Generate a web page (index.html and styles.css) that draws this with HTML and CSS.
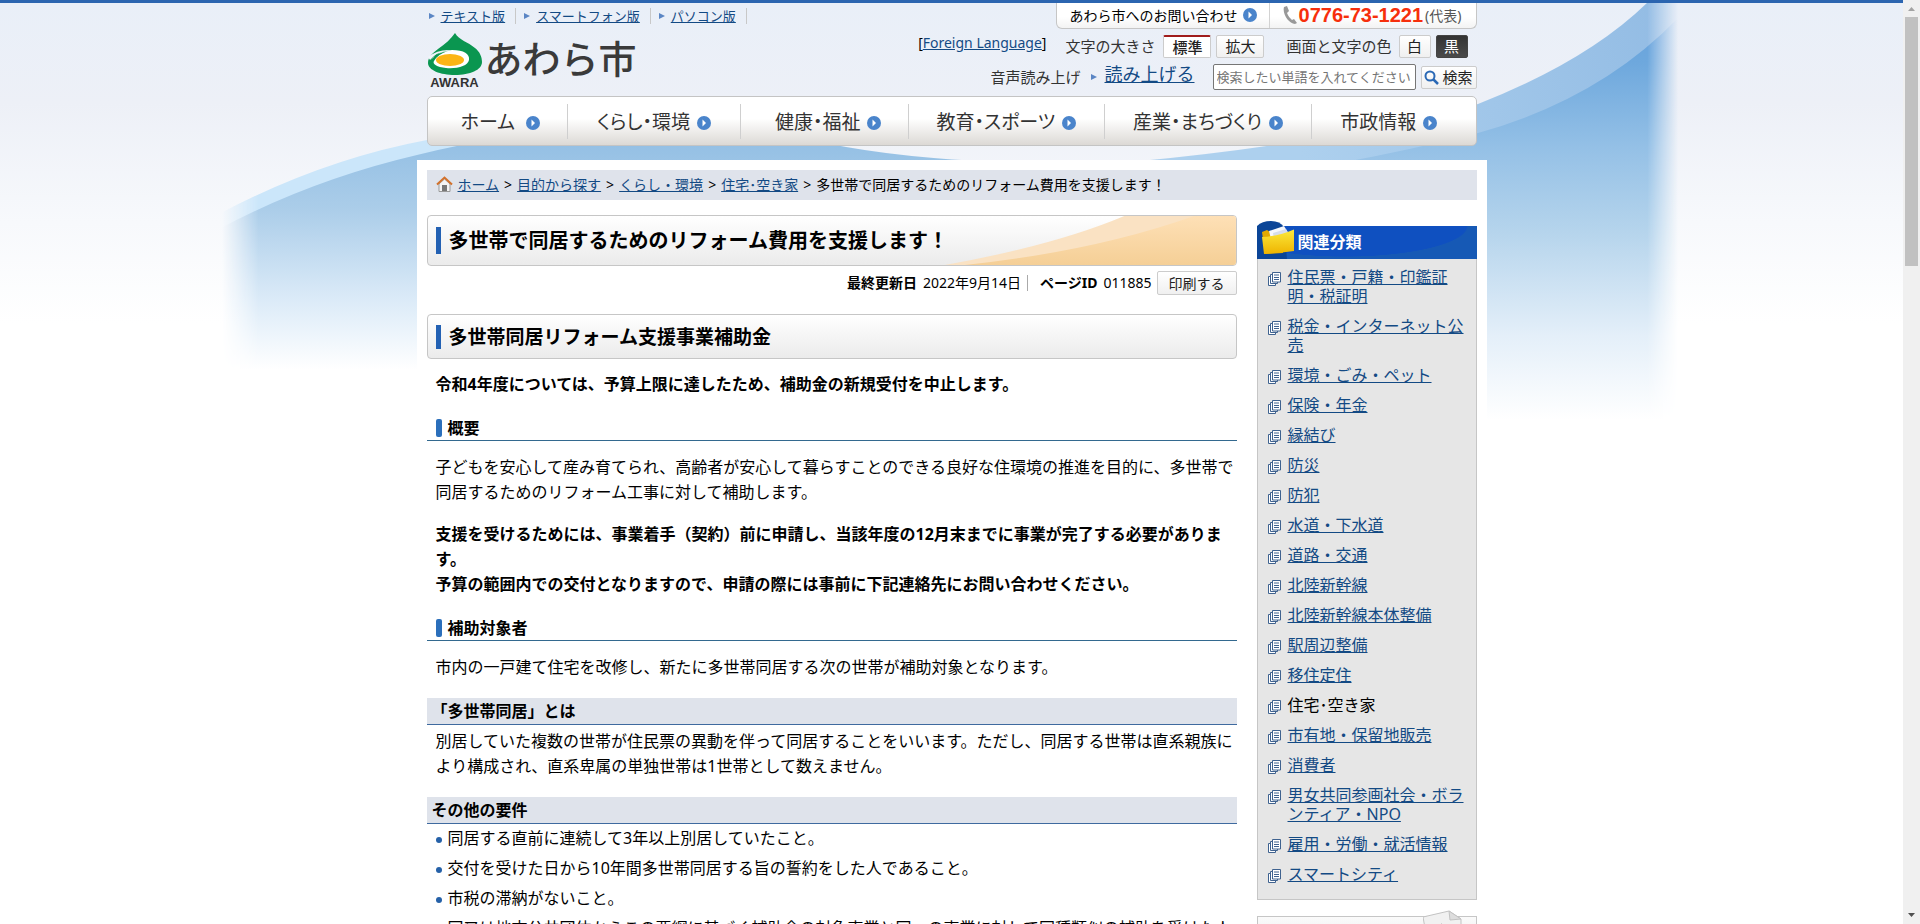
FILE: index.html
```
<!DOCTYPE html>
<html lang="ja">
<head>
<meta charset="utf-8">
<title>多世帯で同居するためのリフォーム費用を支援します！ | あわら市</title>
<link rel="stylesheet" href="styles.css">
</head>
<body>
<svg class="defs" width="0" height="0" aria-hidden="true">
  <symbol id="go" viewBox="0 0 14 14"><circle cx="7" cy="7" r="7" fill="#4a84cb"/><path d="M5.500 3.500 9 7l-3.500 3.500z" fill="#fff"/></symbol>
  <symbol id="tri" viewBox="0 0 6 6"><path d="M0 0 6 3 0 6z" fill="#5b86c4"/></symbol>
  <symbol id="pages" viewBox="0 0 14 14"><g fill="#fff" stroke="#3f628f" stroke-width="1"><path d="M.5 4.500h7v9h-7z"/><path d="M2.500 2.500h7v9h-7z"/><path d="M4.500.5h8v9.500h-8z"/></g><path d="M6 3h5M6 5.500h5M6 7.500h5" stroke="#3f628f" fill="none"/></symbol>
</svg>
<div class="shell">
<div class="page">
  <div class="backdrop" aria-hidden="true">
    <svg width="1903" height="430" viewBox="0 0 1903 430">
      <defs>
        <linearGradient id="sky" gradientUnits="userSpaceOnUse" x1="0" y1="0" x2="0" y2="420">
          <stop offset="0" stop-color="#639fdd"/><stop offset=".15" stop-color="#6ea8dd"/><stop offset=".35" stop-color="#94c0e6"/><stop offset=".55" stop-color="#b5d4ec"/><stop offset=".8" stop-color="#e4eff9"/><stop offset="1" stop-color="#fff"/>
        </linearGradient>
        <linearGradient id="edge" gradientUnits="userSpaceOnUse" x1="222" y1="0" x2="1678" y2="0">
          <stop offset="0" stop-color="#000"/><stop offset=".025" stop-color="#fff"/><stop offset=".979" stop-color="#fff"/><stop offset="1" stop-color="#000"/>
        </linearGradient>
        <linearGradient id="band" gradientUnits="userSpaceOnUse" x1="1300" y1="150" x2="1660" y2="0">
          <stop offset="0" stop-color="#add0ee"/><stop offset="1" stop-color="#93bce4"/>
        </linearGradient>
        <linearGradient id="low" gradientUnits="userSpaceOnUse" x1="0" y1="140" x2="0" y2="370">
          <stop offset="0" stop-color="#93bfe4"/><stop offset=".3" stop-color="#abcde9"/><stop offset=".7" stop-color="#dcebf8"/><stop offset="1" stop-color="#fff"/>
        </linearGradient>
        <mask id="fade" maskUnits="userSpaceOnUse" x="0" y="0" width="1903" height="430"><rect width="1903" height="430" fill="url(#edge)"/></mask>
      </defs>
      <g mask="url(#fade)">
        <path d="M215 216Q320 160 427 140Q640 105 830 145L417 190Q320 200 215 232z" fill="#cbe6fa"/>
        <path d="M215 231Q310 180 417 155Q620 105 830 144Q900 158 1000 162V370H215z" fill="url(#low)"/>
        <path d="M1140 161Q1330 143 1478 104Q1590 60 1650 0H1700V420H1140z" fill="url(#band)"/>
        <path d="M1340 163Q1410 150 1478 133Q1600 99 1678 18L1700 0V420H1340z" fill="url(#sky)"/>
      </g>
    </svg>
  </div>

  <header class="header">
    <div class="brand">
      <ul class="versions">
        <li><svg class="tri"><use href="#tri"/></svg><a href="#">テキスト版</a></li>
        <li><svg class="tri"><use href="#tri"/></svg><a href="#">スマートフォン版</a></li>
        <li><svg class="tri"><use href="#tri"/></svg><a href="#">パソコン版</a></li>
      </ul>
      <a class="logo" href="#" aria-label="あわら市">
        <span class="mark">
          <svg width="54" height="42" viewBox="0 0 54 42"><path d="M27 0C31 7 40 9 47 15C52 19 54 24 54 29C54 37 42 42 27 42S0 37 0 30C0 24 5 20 10 16C17 11 23 6 27 0z" fill="#0a9650"/><path d="M3 27Q12 17 24 17C36 17 42 21 41 27C40 33 29 36 18 35C9 34 4 31 6 28Q10 21 20 18Q8 20 3 27z" fill="#fff"/><path d="M0 24Q10 16 23 17Q8 19 2 27z" fill="#f0f4fa"/><ellipse cx="22" cy="27" rx="14" ry="6" fill="#fbb515"/></svg>
          <span class="mark-name">AWARA</span>
        </span>
        <span class="city">あわら市</span>
      </a>
    </div>
    <div class="tools">
      <div class="contact">
        <a class="inquiry" href="#">あわら市へのお問い合わせ <svg class="go"><use href="#go"/></svg></a>
        <p class="phone"><svg width="14" height="18" viewBox="0 0 14 18"><path d="M1 1 4 0l2 5-2 2c1 3 3 5 5 7l2-1 3 4-2 1C6 18-1 8 1 1z" fill="#999"/></svg><strong>0776-73-1221</strong><span>(代表)</span></p>
      </div>
      <div class="settings">
        <p class="lang">[<a href="#">Foreign Language</a>]</p>
        <span class="label size-label">文字の大きさ</span>
        <button class="btn standard">標準</button>
        <button class="btn larger">拡大</button>
        <span class="label color-label">画面と文字の色</span>
        <button class="btn white">白</button>
        <button class="btn black">黒</button>
      </div>
      <form class="search">
        <span class="label">音声読み上げ</span>
        <svg class="tri"><use href="#tri"/></svg>
        <a class="read" href="#">読み上げる</a>
        <input type="text" aria-label="検索" placeholder="検索したい単語を入れてください">
        <button class="btn find" type="button"><svg width="15" height="15" viewBox="0 0 15 15"><circle cx="6" cy="6" r="4.500" fill="none" stroke="#2b69b5" stroke-width="2"/><path d="m9 9 5 5" stroke="#2b69b5" stroke-width="2.500"/></svg>検索</button>
      </form>
    </div>
  </header>

  <nav class="nav">
    <a class="home" href="#">ホーム<svg class="go"><use href="#go"/></svg></a>
    <a href="#">くらし・環境<svg class="go"><use href="#go"/></svg></a>
    <a class="health" href="#">健康・福祉<svg class="go"><use href="#go"/></svg></a>
    <a href="#">教育・スポーツ<svg class="go"><use href="#go"/></svg></a>
    <a href="#">産業・まちづくり<svg class="go"><use href="#go"/></svg></a>
    <a class="city-info" href="#">市政情報<svg class="go"><use href="#go"/></svg></a>
  </nav>

  <div class="content">
    <div class="crumbs">
      <svg width="17" height="16" viewBox="0 0 17 16"><path d="M3 8v7.500h11V8L8.500 3z" fill="#f4f4f4" stroke="#999"/><path d="M6 9h5v6H6z" fill="#777"/><path d="M1 8.500 8.500 1.500 16 8.500" fill="none" stroke="#d2712b" stroke-width="2"/></svg>
      <a href="#">ホーム</a><span>&gt;</span><a href="#">目的から探す</a><span>&gt;</span><a href="#">くらし・環境</a><span>&gt;</span><a href="#">住宅･空き家</a><span>&gt;</span><span>多世帯で同居するためのリフォーム費用を支援します！</span>
    </div>
    <div class="columns">
      <main class="main">
        <div class="title">
          <svg class="title-art" viewBox="0 0 292 50" preserveAspectRatio="none" aria-hidden="true"><defs><linearGradient id="peach" x2="0" y2="1"><stop stop-color="#fee0b6"/><stop offset="1" stop-color="#f5cf96"/></linearGradient></defs><path d="M0 50Q110 30 180 0H292V50z" fill="#fae2c3"/><path d="M20 50Q150 36 250 0H292V50z" fill="url(#peach)"/></svg>
          <h1>多世帯で同居するためのリフォーム費用を支援します！</h1>
        </div>
        <div class="meta">
          <p class="date"><b>最終更新日</b><span>2022年9月14日</span></p>
          <p><b>ページID</b><span>011885</span></p>
          <button class="btn print">印刷する</button>
        </div>
        <div class="section"><h2>多世帯同居リフォーム支援事業補助金</h2></div>
        <p class="notice"><strong>令和4年度については、予算上限に達したため、補助金の新規受付を中止します。</strong></p>
        <h3>概要</h3>
        <p class="intro">子どもを安心して産み育てられ、高齢者が安心して暮らすことのできる良好な住環境の推進を目的に、多世帯で同居するためのリフォーム工事に対して補助します。</p>
        <p class="terms"><strong>支援を受けるためには、事業着手（契約）前に申請し、当該年度の12月末までに事業が完了する必要があります。<br>予算の範囲内での交付となりますので、申請の際には事前に下記連絡先にお問い合わせください。</strong></p>
        <h3>補助対象者</h3>
        <p class="target">市内の一戸建て住宅を改修し、新たに多世帯同居する次の世帯が補助対象となります。</p>
        <h4>「多世帯同居」とは</h4>
        <p class="define">別居していた複数の世帯が住民票の異動を伴って同居することをいいます。ただし、同居する世帯は直系親族により構成され、直系卑属の単独世帯は1世帯として数えません。</p>
        <h4>その他の要件</h4>
        <ul class="terms-list">
          <li>同居する直前に連続して3年以上別居していたこと。</li>
          <li>交付を受けた日から10年間多世帯同居する旨の誓約をした人であること。</li>
          <li>市税の滞納がないこと。</li>
          <li>国又は地方公共団体からこの要綱に基づく補助金の対象事業と同一の事業に対して同種類似の補助を受けた人</li>
        </ul>
      </main>
      <aside class="side">
        <div class="side-head">
          <svg class="folder" width="40" height="38" viewBox="0 0 40 38" aria-hidden="true"><defs><linearGradient id="gold" x2="0" y2="1"><stop stop-color="#fbe93c"/><stop offset="1" stop-color="#efb400"/></linearGradient></defs><path d="M0 5Q5 0 14 0T27 6L30 38H0z" fill="#0b4597"/><path d="M5 11 10 9l3 2 12-2 1 23-18 1z" fill="#e2a900"/><path d="M12 10 27 5l5 8-18 5z" fill="#f5f7fb"/><path d="M16 12 29 8l2 4-14 6z" fill="#d5dceb"/><path d="M5 16Q22 15 37 8.500L37 30Q22 32 7 33z" fill="url(#gold)"/></svg>
          <h2>関連分類</h2>
        </div>
        <ul class="side-list">
          <li><svg><use href="#pages"/></svg><a href="#">住民票・戸籍・印鑑証明・税証明</a></li>
          <li><svg><use href="#pages"/></svg><a href="#">税金・インターネット公売</a></li>
          <li><svg><use href="#pages"/></svg><a href="#">環境・ごみ・ペット</a></li>
          <li><svg><use href="#pages"/></svg><a href="#">保険・年金</a></li>
          <li><svg><use href="#pages"/></svg><a href="#">縁結び</a></li>
          <li><svg><use href="#pages"/></svg><a href="#">防災</a></li>
          <li><svg><use href="#pages"/></svg><a href="#">防犯</a></li>
          <li><svg><use href="#pages"/></svg><a href="#">水道・下水道</a></li>
          <li><svg><use href="#pages"/></svg><a href="#">道路・交通</a></li>
          <li><svg><use href="#pages"/></svg><a href="#">北陸新幹線</a></li>
          <li><svg><use href="#pages"/></svg><a href="#">北陸新幹線本体整備</a></li>
          <li><svg><use href="#pages"/></svg><a href="#">駅周辺整備</a></li>
          <li><svg><use href="#pages"/></svg><a href="#">移住定住</a></li>
          <li><svg><use href="#pages"/></svg><span>住宅･空き家</span></li>
          <li><svg><use href="#pages"/></svg><a href="#">市有地・保留地販売</a></li>
          <li><svg><use href="#pages"/></svg><a href="#">消費者</a></li>
          <li><svg><use href="#pages"/></svg><a href="#">男女共同参画社会・ボランティア・NPO</a></li>
          <li><svg><use href="#pages"/></svg><a href="#">雇用・労働・就活情報</a></li>
          <li><svg><use href="#pages"/></svg><a href="#">スマートシティ</a></li>
        </ul>
        <div class="side-next"><svg class="sheet" width="40" height="40" viewBox="0 0 40 40" aria-hidden="true"><path d="M0 7 26 1l12 8v31H6z" fill="#f1f1f1" stroke="#c2c2c2"/><path d="m26 1 1 9 11-1z" fill="#ddd" stroke="#c2c2c2"/><path d="m13 16 6-2" stroke="#999"/></svg></div>
      </aside>
    </div>
  </div>
</div>
<div class="scroll" aria-hidden="true">
  <svg width="17" height="17" viewBox="0 0 17 17"><path d="M5 11h7L8.500 7z" fill="#a3a3a3"/></svg>
  <div class="track"><div class="thumb"></div></div>
  <svg width="17" height="17" viewBox="0 0 17 17"><path d="M5 6h7L8.500 10z" fill="#505050"/></svg>
</div>
</div>
</body>
</html>
```
FILE: styles.css
```
* { box-sizing: border-box; }
body, p, h1, h2, h3, h4, ul { margin: 0; padding: 0; }
body {
  font-family: "Noto Sans", "Noto Sans CJK JP", sans-serif;
  font-size: 16px;
  line-height: 25px;
  color: #000;
}
ul { list-style: none; }
a { color: #134a84; }
.defs { position: absolute; }
.shell {
  display: grid;
  grid-template-columns: minmax(0, 1fr) 17px;
  height: 100vh;
  overflow: hidden;
}
.page {
  position: relative;
  overflow: hidden;
  border-top: 3px solid #2b65b0;
  background: linear-gradient(#e9eff8, #edf0f7 100px, #f7f9fc 220px, #fff 320px);
}
.backdrop {
  position: absolute;
  inset: -3px 0 auto;
  display: flex;
  justify-content: center;
  z-index: 0;
}
.backdrop svg { flex: none; }
.header, .nav, .content { position: relative; z-index: 1; }
.header {
  max-width: 1050px;
  margin: 0 auto;
  display: flex;
  justify-content: space-between;
}
.go { width: 14px; height: 14px; flex: none; }
.tri { width: 6px; height: 6px; flex: none; }

.versions { display: flex; padding-top: 5px; }
.versions li {
  display: flex;
  align-items: center;
  gap: 6px;
  padding: 0 10px 0 2px;
  margin-right: 6px;
  border-right: 1px solid #c8c8c8;
  font-size: 13px;
  line-height: 16px;
}
.logo { display: flex; gap: 3px; margin-top: 9px; color: #3a3a3a; text-decoration: none; }
.mark { display: flex; flex-direction: column; align-items: center; padding-left: 1px; }
.mark-name {
  font: bold 13px/16px "Liberation Sans", Arial, sans-serif;
  color: #333;
}
.city { font-size: 38px; line-height: 50px; font-weight: 500; }

.tools { display: flex; flex-direction: column; align-items: flex-end; }
.contact {
  display: flex;
  height: 29px;
  margin-top: -3px;
  background: linear-gradient(#fff 60%, #f3f3f3);
  border: 1px solid #c6c6c6;
  border-width: 0 1px 1px;
  border-radius: 0 0 6px 6px;
}
.inquiry {
  display: flex;
  align-items: center;
  gap: 5px;
  padding: 2px 12px 0 13px;
  border-right: 1px solid #d2d2d2;
  font-size: 14px;
  color: #000;
  text-decoration: none;
}
.phone { display: flex; align-items: center; padding: 2px 14px 0 13px; gap: 2px; font-size: 14px; color: #555; }
.phone strong { font: bold 20px/24px "Liberation Sans", Arial, sans-serif; color: #f62f0c; }
.settings { display: flex; align-items: center; gap: 5px; padding: 6px 9px 0 0; }
.label { font-size: 15px; line-height: 23px; color: #333; }
.lang { font-size: 14px; line-height: 16px; padding-bottom: 7px; margin-right: 14px; }
.size-label { margin-right: 3px; }
.color-label { margin: 0 2px 0 17px; }
.btn {
  height: 23px;
  padding: 0;
  font-family: inherit;
  font-size: 15px;
  line-height: 19px;
  color: #222;
  background: linear-gradient(#fff, #f0f0f0);
  border: 1px solid #ccc;
  border-radius: 2px;
}
.standard, .larger { width: 48px; }
.standard { border-top: 2px solid #a01c1c; background: #fff; font-weight: 500; }
.white, .black { width: 32px; }
.black { background: linear-gradient(#333, #4a4a4a); color: #fff; border-color: #444; }
.search { display: flex; align-items: center; padding-top: 6px; }
.search .tri { margin: 0 8px 0 10px; }
.read { font-size: 18px; line-height: 20px; padding-bottom: 6px; margin-right: 18px; }
.search .label { margin-left: 2px; }
.search input {
  width: 203px;
  height: 26px;
  padding: 0 3px;
  border: 1px solid #767676;
  border-radius: 2px;
  font-family: inherit;
  font-size: 13px;
}
.search input::placeholder { color: #757575; }
.find { display: flex; align-items: center; justify-content: center; gap: 3px; width: 56px; margin-left: 5px; }

.nav {
  max-width: 1050px;
  margin: 5px auto 0;
  height: 50px;
  display: grid;
  grid-template-columns: 141fr 173fr 168fr 197fr 207fr 164fr;
  align-items: center;
  background: linear-gradient(#fff 45%, #dcd9d5);
  border: 1px solid #c4c4c4;
  border-radius: 5px;
}
.nav a {
  display: flex;
  align-items: center;
  justify-content: center;
  gap: 7px;
  height: 35px;
  padding-top: 3px;
  border-right: 1px solid #cfcfcf;
  color: #333;
  font-size: 19px;
  font-feature-settings: "palt";
  text-decoration: none;
  white-space: nowrap;
}
.nav a:last-child { border-right: 0; }
.nav .home { gap: 11px; padding-left: 6px; }
.nav .health { padding-left: 8px; }
.nav .city-info { padding-right: 10px; }

.content {
  max-width: 1070px;
  margin: 14px auto 0;
  padding: 10px;
  background: #fff;
}
.crumbs {
  display: flex;
  align-items: center;
  height: 30px;
  padding: 0 0 2px 9px;
  gap: 5px;
  background: #dfe3eb;
  font-size: 14px;
  white-space: nowrap;
}
.columns { display: flex; gap: 20px; padding-top: 15px; }
.main { flex: 1; min-width: 0; }
.title, .section {
  position: relative;
  display: flex;
  align-items: center;
  padding-left: 8px;
  border: 1px solid #c6c6c6;
  border-radius: 4px;
  background: linear-gradient(#fff, #ebebeb);
  overflow: hidden;
}
.title { height: 51px; }
.section { height: 45px; margin-top: 19px; }
.title-art { position: absolute; right: 0; top: 0; width: 36%; height: 100%; }
.title h1, .section h2 { position: relative; border-left: 5px solid #2361b3; padding-left: 8px; }
.title h1 { font-size: 20px; line-height: 27px; }
.section h2 { font-size: 19px; line-height: 24px; }
.meta { display: flex; justify-content: flex-end; align-items: center; padding-top: 5px; font-size: 14px; }
.meta p { display: flex; gap: 6px; line-height: 16px; }
.meta .date { border-right: 1px solid #aaa; padding-right: 6px; margin-right: 12px; }
.print { width: 80px; height: 24px; margin-left: 5px; font-size: 14px; }
.main > p { padding: 0 0 0 9px; }
.notice { margin-top: 13px; }
.main h3 {
  display: flex;
  align-items: center;
  gap: 6px;
  margin-top: 19px;
  padding: 0 0 0 9px;
  border-bottom: 1px solid #33698f;
  font-size: 16px;
  line-height: 24px;
}
.main h3::before { content: ""; width: 6px; height: 18px; border-radius: 2px; background: #2b6fbb; }
.intro { margin-top: 14px; }
.terms { margin-top: 17px; }
.target { margin-top: 14px; }
.main h4 {
  margin-top: 18px;
  padding: 0 5px;
  border-bottom: 1px solid #3f6a9f;
  background: #dfe3eb;
  font-size: 16px;
  line-height: 26px;
}
.define { margin-top: 4px; }
.terms-list { margin-left: 9px; }
.terms-list li { position: relative; padding: 2px 0 3px 12px; white-space: nowrap; }
.terms-list li::before {
  content: "";
  position: absolute;
  left: 0;
  top: 13px;
  width: 6px;
  height: 6px;
  border-radius: 50%;
  background: #2561a8;
}
.side { width: 220px; flex: none; padding-top: 11px; }
.side-head {
  position: relative;
  height: 33px;
  padding-left: 41px;
  background: radial-gradient(ellipse at 40% 0, #0f50c0 65%, #1659b5 66%);
}
.side-head h2 { color: #fff; font-size: 16px; line-height: 33px; }
.folder { position: absolute; left: 0; bottom: 0; }
.side-list {
  display: flex;
  flex-direction: column;
  gap: 11px;
  padding: 9px 9px 15px 10px;
  border: 1px solid #c6c6c6;
  border-top: 0;
  background: #e6e6e6;
}
.side-list li { display: flex; gap: 6px; line-height: 19px; }
.side-list svg { width: 14px; height: 14px; flex: none; margin-top: 4px; }
.side-next {
  position: relative;
  height: 50px;
  margin-top: 16px;
  border: 1px solid #c6c6c6;
  background: linear-gradient(#fafafa, #e6e6e6);
}
.sheet { position: absolute; right: 13px; top: -7px; }

.scroll { display: flex; flex-direction: column; background: #f0f0f0; }
.track { flex: 1; padding: 0 2px; }
.thumb { height: 28%; background: #c1c1c1; }
```
